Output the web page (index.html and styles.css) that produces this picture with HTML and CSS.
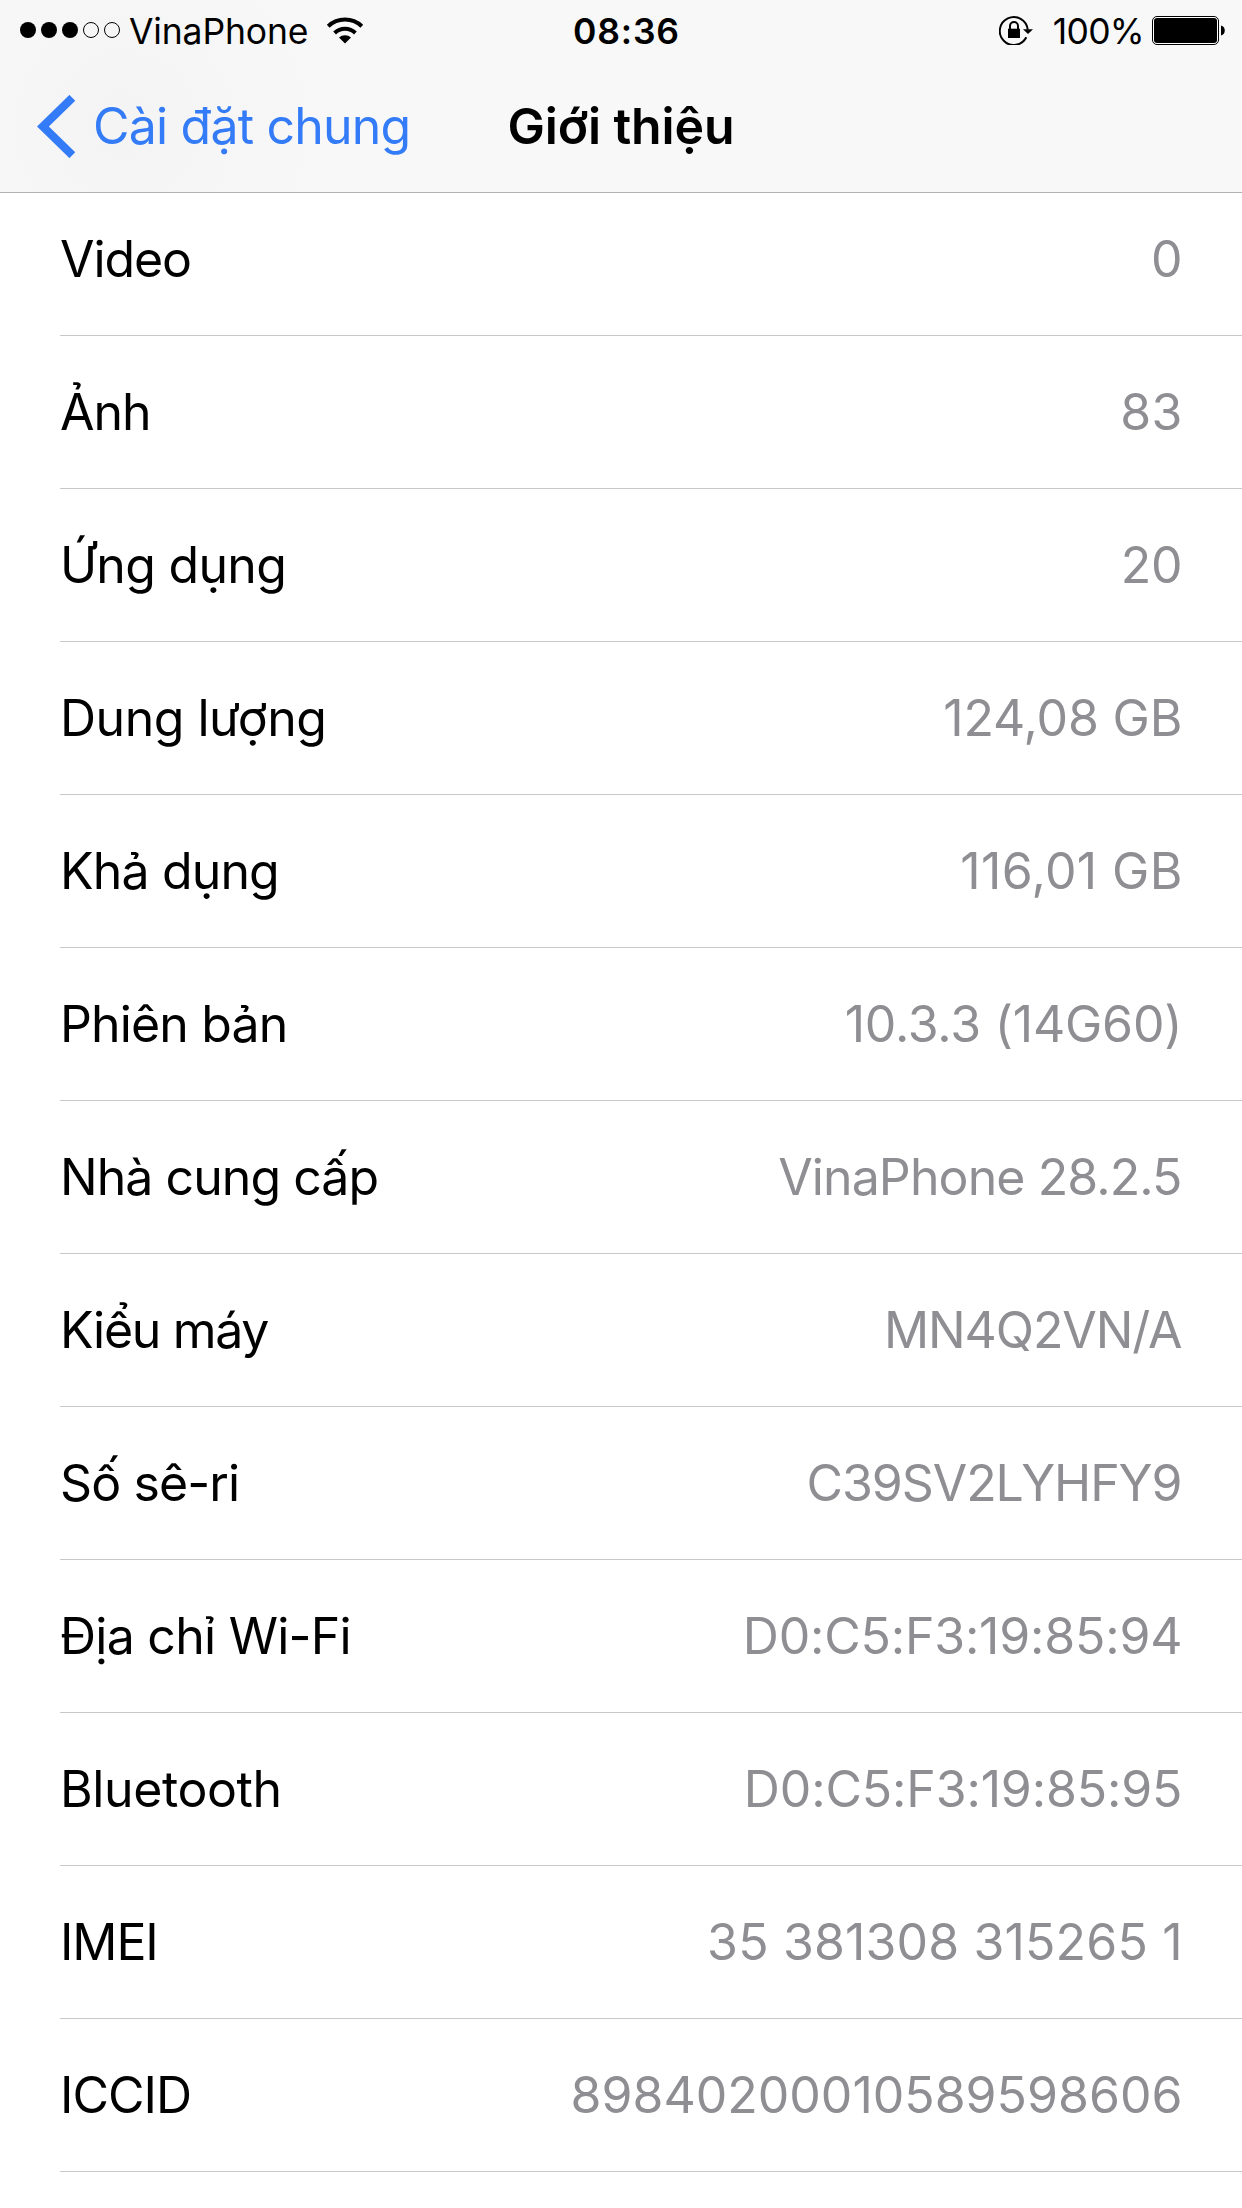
FILE: index.html
```html
<!DOCTYPE html>
<html lang="vi">
<head>
<meta charset="utf-8">
<title>Giới thiệu</title>
<link rel="stylesheet" href="styles.css">
</head>
<body>
<header class="header">
  <div class="status">
    <div class="status-left">
      <svg class="signal" width="100" height="16" viewBox="0 0 100 16"><circle cx="8" cy="8" r="8"/><circle cx="29" cy="8" r="8"/><circle cx="50" cy="8" r="8"/><g fill="none" stroke="#000"><circle cx="71" cy="8" r="7.500"/><circle cx="92" cy="8" r="7.500"/></g></svg>
      <span class="carrier">VinaPhone</span>
      <svg class="wifi" width="38" height="28" viewBox="0 0 38 28"><path d="M19 27.500l6-6a8.800 8.800 0 0 0-12 0z"/><g fill="none" stroke="#000" stroke-width="4"><path d="M8.600 17a15 15 0 0 1 20.800 0"/><path d="M2.200 10.200a24.500 24.500 0 0 1 33.600 0"/></g></svg>
    </div>
    <div class="clock">08:36</div>
    <div class="status-right">
      <svg class="lock" width="34" height="30" viewBox="0 0 34 30"><path d="M27.300 22.300A14 14 0 1 1 28.700 14.500" fill="none" stroke="#000" stroke-width="2"/><path d="M24 14.300h10l-5 4.700z"/><rect x="9" y="13.700" width="12" height="9.300"/><path d="M11 15v-4a4 4 0 0 1 8 0v4" fill="none" stroke="#000" stroke-width="2"/></svg>
      <span class="percent">100%</span>
      <svg class="battery" width="73" height="29" viewBox="0 0 73 29"><rect x=".5" y=".5" width="66" height="28" rx="4.500" fill="#fff" stroke="#000"/><rect x="2" y="2" width="63" height="25" rx="3"/><path d="M69 9.500c5 1 5 9 0 10z"/></svg>
    </div>
  </div>
  <nav class="nav">
    <a class="back"><svg width="38" height="63" viewBox="0 0 38 63"><path d="M35.300 2.800L5.900 31.500l29.400 28.700" fill="none" stroke="#347bf7" stroke-width="8.200"/></svg><span>Cài đặt chung</span></a>
    <h1 class="title">Giới thiệu</h1>
  </nav>
</header>
<main class="list">
  <div class="row video"><span class="label">Video</span><span class="value">0</span></div>
  <div class="row photos"><span class="label">Ảnh</span><span class="value">83</span></div>
  <div class="row apps"><span class="label">Ứng dụng</span><span class="value">20</span></div>
  <div class="row capacity"><span class="label">Dung lượng</span><span class="value">124,08 GB</span></div>
  <div class="row available"><span class="label">Khả dụng</span><span class="value">116,01 GB</span></div>
  <div class="row version"><span class="label">Phiên bản</span><span class="value">10.3.3 (14G60)</span></div>
  <div class="row provider"><span class="label">Nhà cung cấp</span><span class="value">VinaPhone 28.2.5</span></div>
  <div class="row model"><span class="label">Kiểu máy</span><span class="value">MN4Q2VN/A</span></div>
  <div class="row serial"><span class="label">Số sê-ri</span><span class="value">C39SV2LYHFY9</span></div>
  <div class="row wifi-address"><span class="label">Địa chỉ Wi-Fi</span><span class="value">D0:C5:F3:19:85:94</span></div>
  <div class="row bluetooth"><span class="label">Bluetooth</span><span class="value">D0:C5:F3:19:85:95</span></div>
  <div class="row imei"><span class="label">IMEI</span><span class="value">35 381308 315265 1</span></div>
  <div class="row iccid"><span class="label">ICCID</span><span class="value">89840200010589598606</span></div>
</main>
</body>
</html>
```
FILE: styles.css
```css
* { box-sizing: border-box; }
body { margin: 0; height: 2208px; overflow: hidden; background: #fff; color: #000; font-family: Inter, "Liberation Sans", sans-serif; }
svg { display: block; flex: none; }

.header { height: 193px; background: radial-gradient(circle at 125px 125px, #f4f4f4 0, #f5f5f5 60px, #f8f8f8 200px); border-bottom: 1px solid #b2b2b2; }
.status { display: grid; grid-template-columns: 1fr auto 1fr; align-items: center; height: 60px; padding: 3px 17px 0 20px; font-size: 35.5px; line-height: 43px; }
.status-left, .status-right { display: flex; align-items: center; }
.status-right { justify-content: flex-end; }
.signal, .lock { margin-bottom: 3px; }
.carrier { margin: 0 18px 0 9px; letter-spacing: -.15px; }
.wifi { margin-bottom: 3px; }
.clock { padding-left: 8px; font-weight: 600; letter-spacing: .8px; }
.percent { margin: 0 8px 0 20px; letter-spacing: -.7px; }
.battery { margin-bottom: 2px; }

.nav { display: grid; grid-template-columns: 1fr auto 1fr; align-items: center; height: 132px; padding: 0 37px; font-size: 50px; }
.back { display: flex; align-items: center; gap: 18px; color: #347bf7; letter-spacing: -.8px; white-space: nowrap; }
.title { margin: 0; font-size: 50px; font-weight: 600; letter-spacing: -.1px; }

.row { display: flex; justify-content: space-between; align-items: center; height: 153px; margin-left: 60px; padding-right: 60px; border-bottom: 1px solid #c8c7cc; font-size: 50px; }
.label { letter-spacing: var(--label-track); }
.value { color: #8e8e93; letter-spacing: var(--value-track); margin-right: calc(-.5px - var(--value-track)); }

.video { height: 143px; padding-bottom: 10px; --label-track: -1.1px; --value-track: 0px; }
.photos { --label-track: -1px; --value-track: .5px; }
.apps { --label-track: -.7px; --value-track: -.4px; }
.capacity { --label-track: -.5px; --value-track: -.15px; }
.available { --label-track: -.85px; --value-track: .4px; }
.version { --label-track: -.85px; --value-track: -.2px; }
.provider { --label-track: -.95px; --value-track: -.9px; }
.model { --label-track: -1.3px; --value-track: -1.1px; }
.serial { --label-track: -.9px; --value-track: -1.05px; }
.wifi-address { --label-track: -.75px; --value-track: -.2px; }
.bluetooth { --label-track: -.4px; --value-track: -.15px; }
.imei { --label-track: -1.1px; --value-track: .15px; }
.iccid { --label-track: -1px; --value-track: 0px; }
```
